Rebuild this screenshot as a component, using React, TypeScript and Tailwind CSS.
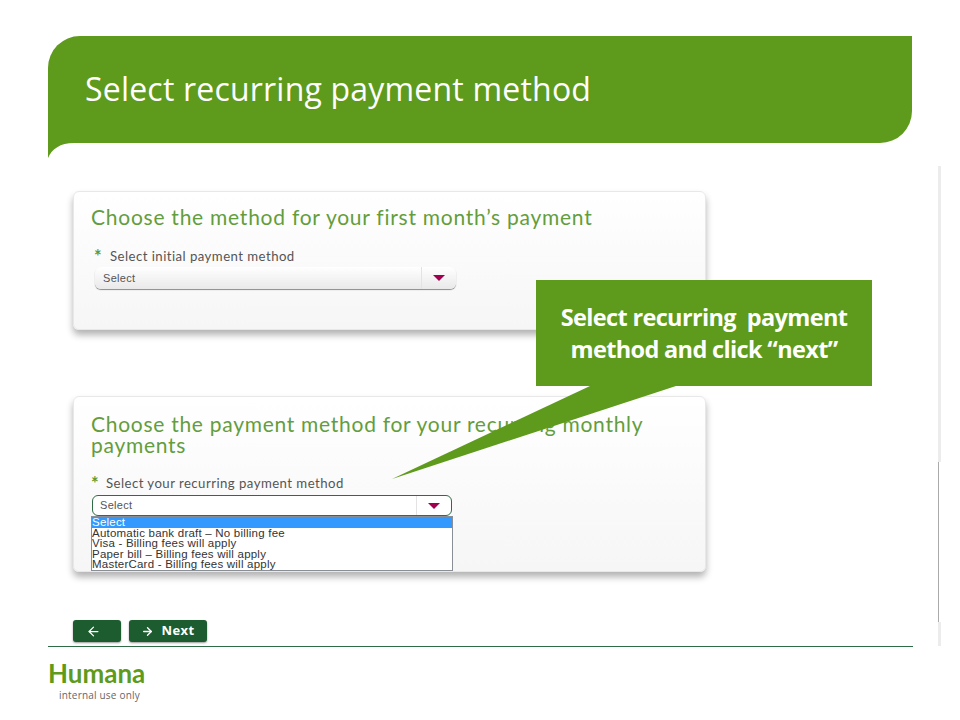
import React from 'react';
import { ArrowLeft, ArrowRight } from 'lucide-react';

const options = [
  'Select',
  'Automatic bank draft – No billing fee',
  'Visa - Billing fees will apply',
  'Paper bill – Billing fees will apply',
  'MasterCard - Billing fees will apply',
];

const headingFont = "font-['Lato',sans-serif]";

function Caret() {
  return (
    <svg width="12" height="6" viewBox="0 0 12 6" aria-hidden="true">
      <path d="M0 0 L12 0 L6 6 Z" fill="#a0004f" />
    </svg>
  );
}

export default function App() {
  return (
    <div className="relative flex h-[720px] w-[960px] flex-col overflow-hidden bg-white pt-[36px]">
      {/* Title banner */}
      <div className="relative mx-[48px] flex h-[107px] items-center rounded-tl-[32px] rounded-br-[32px] bg-[#5e9a1b] pb-[2px] pl-[37px]">
        <h1 className="font-['Open_Sans',sans-serif] text-[32px] leading-none tracking-[0.2px] text-white">
          Select recurring payment method
        </h1>
        <svg className="absolute top-[107px] left-0" width="32" height="16" viewBox="0 0 32 16" aria-hidden="true">
          <path d="M0 0 H26 C12 0 4 6 0 15 Z" fill="#5e9a1b" />
        </svg>
      </div>

      {/* Captured form + scrollbar */}
      <div className="mt-[23px] flex h-[480px]">
        <div className="ml-[73px] flex w-[633px] flex-col pt-[25px]">
          <section className="h-[139px] rounded-[6px] border border-[#e8e8e8] bg-gradient-to-b from-white to-[#f6f6f6] pt-[13px] pl-[17px] shadow-[0_5px_7px_rgba(0,0,0,0.3)]">
            <h2 className={`${headingFont} text-[21px] leading-[24px] tracking-[0.75px] text-[#639d3c]`}>
              Choose the method for your first month’s payment
            </h2>
            <div className={`${headingFont} mt-[21px] flex h-[14px] items-center text-[13.2px] tracking-[0.45px] text-[#555555]`}>
              <span className="mt-[-3px] ml-[3px] w-[16px] text-[18px] leading-none font-bold text-[#5f9b35]">*</span>
              Select initial payment method
            </div>
            <div className="mt-[3px] ml-[4px] flex h-[22px] w-[361px] items-center rounded-[6px] bg-gradient-to-b from-white to-[#e9e9e9] pl-[8px] shadow-[0_1px_1px_rgba(0,0,0,0.45)]">
              <span className="flex-1 font-['Liberation_Sans',sans-serif] text-[11px] tracking-[0.3px] text-[#555555]">Select</span>
              <span className="flex h-full w-[35px] items-center justify-center border-l border-[#e3e3e3]">
                <Caret />
              </span>
            </div>
          </section>

          <section className="mt-[66px] h-[176px] rounded-[6px] border border-[#e8e8e8] bg-gradient-to-b from-white to-[#f6f6f6] pt-[16px] pl-[17px] shadow-[0_5px_7px_rgba(0,0,0,0.3)]">
            <h2 className={`${headingFont} w-[590px] text-[21px] leading-[21px] tracking-[0.72px] text-[#639d3c]`}>
              Choose the payment method for your recurring monthly payments
            </h2>
            <div className={`${headingFont} mt-[22px] flex h-[14px] items-center text-[13.2px] tracking-[0.45px] text-[#555555]`}>
              <span className="mt-[-3px] w-[15px] text-[18px] leading-none font-bold text-[#5f9b35]">*</span>
              Select your recurring payment method
            </div>
            <div className="mt-[4px] ml-[1px] flex h-[21px] w-[360px] items-center rounded-[6px] border border-[#2f6b45] bg-white pl-[7px]">
              <span className="flex-1 font-['Liberation_Sans',sans-serif] text-[11px] tracking-[0.3px] text-[#555555]">Select</span>
              <span className="flex h-full w-[35px] items-center justify-center border-l border-[#e3e3e3]">
                <Caret />
              </span>
            </div>
            <ul className="h-[55px] w-[362px] overflow-hidden border border-[#8a8f96] bg-white font-['Liberation_Sans',sans-serif] text-[11.5px] leading-[10.6px] tracking-[0.22px] text-[#333333]">
              {options.map((o, i) => (
                <li key={o} className={i === 0 ? 'bg-[#3399ff] text-white' : ''}>
                  {o}
                </li>
              ))}
            </ul>
          </section>

          <div className="mt-[48px] flex gap-[8px] font-['Open_Sans',sans-serif]">
            <button className="flex h-[22px] w-[48px] items-center justify-center rounded-[3px] bg-[#1c5c2e] pr-[8px] text-white shadow-[0_1px_2px_rgba(0,0,0,0.4)]">
              <ArrowLeft size={15} strokeWidth={2} />
            </button>
            <button className="flex h-[22px] w-[78px] items-center justify-center gap-[7px] rounded-[3px] bg-[#1c5c2e] text-[13px] font-bold tracking-[0.4px] text-white shadow-[0_1px_2px_rgba(0,0,0,0.4)]">
              <ArrowRight size={13} strokeWidth={2.5} /> Next
            </button>
          </div>
        </div>

        {/* Scrollbar */}
        <div className="ml-[232px] h-[480px] w-[3px] bg-[#ececec] pt-[296px]">
          <div className="h-[160px] w-[3px] border-l border-[#aaaaaa] bg-white"></div>
        </div>
      </div>

      {/* Footer */}
      <div className="ml-[48px] h-px w-[865px] bg-[#2f6b45]"></div>
      <div className="ml-[48px] mt-[13px] font-['Lato',sans-serif] text-[26px] leading-[27px] font-bold text-[#5e9a1b]">Humana</div>
      <div className="ml-[59px] mt-[1px] font-['Open_Sans',sans-serif] text-[10px] tracking-[0.2px] text-[#666666]">internal use only</div>

      {/* Callout */}
      <div className="absolute top-[280px] left-[536px] flex h-[106px] w-[336px] items-center justify-center bg-[#5e9a1b] text-center font-['Open_Sans',sans-serif] text-[23.5px] leading-[32px] font-bold tracking-[-0.65px] text-white">
        <p>
          Select recurring&nbsp; payment
          <br />
          method and click “next”
        </p>
      </div>
      <svg className="absolute top-[385px] left-[390px]" width="290" height="96" viewBox="0 0 290 96" aria-hidden="true">
        <path d="M200 1 L286 1 L2 94 Z" fill="#5e9a1b" />
      </svg>
    </div>
  );
}
